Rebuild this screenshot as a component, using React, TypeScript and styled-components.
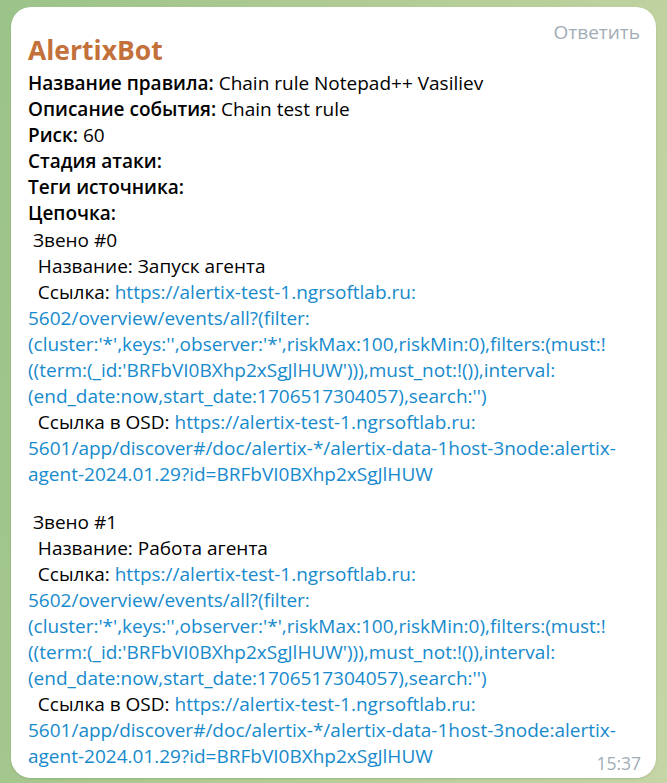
import React from 'react';
import styled, { createGlobalStyle } from 'styled-components';

const GlobalStyle = createGlobalStyle`
  html, body {
    margin: 0;
    padding: 0;
    height: 100%;
  }
  body {
    font-family: 'Open Sans', 'Noto Sans', sans-serif;
    background: linear-gradient(100deg, #9bc389 0%, #b3cc95 50%, #c5d5a5 100%);
  }
`;

const LINK_ID = "BRFbVI0BXhp2xSgJlHUW";

type Link = {
  title: string;
  name: string;
};

const chain: Link[] = [
  { title: 'Звено #0', name: 'Запуск агента' },
  { title: 'Звено #1', name: 'Работа агента' },
];

function ChainBlock({ link, last }: { link: Link; last: boolean }) {
  return (
    <>
      <Line>{' ' + link.title}</Line>
      <Line>{'  Название: ' + link.name}</Line>
      <Line>
        {'  Ссылка: '}
        <A>https://alertix-test-1.ngrsoftlab.ru:</A>
      </Line>
      <Line><A>5602/overview/events/all?(filter:</A></Line>
      <Line><A>(cluster:'*',keys:'',observer:'*',riskMax:100,riskMin:0),filters:(must:!</A></Line>
      <Line><A>((term:(_id:'{LINK_ID}'))),must_not:!()),interval:</A></Line>
      <Line><A>(end_date:now,start_date:1706517304057),search:'')</A></Line>
      <Line>
        {'  Ссылка в OSD: '}
        <A>https://alertix-test-1.ngrsoftlab.ru:</A>
      </Line>
      <Line><A>5601/app/discover#/doc/alertix-*/alertix-data-1host-3node:alertix-</A></Line>
      {last ? (
        <LastLine>
          <A>agent-2024.01.29?id={LINK_ID}</A>
          <Time>15:37</Time>
        </LastLine>
      ) : (
        <Line><A>agent-2024.01.29?id={LINK_ID}</A></Line>
      )}
    </>
  );
}

export default function App() {
  return (
    <>
      <GlobalStyle />
      <Page>
        <Bubble>
          <Header>
            <Title>AlertixBot</Title>
            <Reply>Ответить</Reply>
          </Header>
          <Body>
            <Line><B>Название правила:</B> Chain rule Notepad++ Vasiliev</Line>
            <Line><B>Описание события:</B> Chain test rule</Line>
            <Line><B>Риск:</B> 60</Line>
            <Line><B>Стадия атаки:</B></Line>
            <Line><B>Теги источника:</B></Line>
            <Line><B>Цепочка:</B></Line>
            {chain.map((link, i) => (
              <React.Fragment key={link.title}>
                {i > 0 && <Spacer />}
                <ChainBlock link={link} last={i === chain.length - 1} />
              </React.Fragment>
            ))}
          </Body>
        </Bubble>
      </Page>
    </>
  );
}

const Page = styled.div`
  padding: 7px 11px 5px 11px;
  box-sizing: border-box;
  width: 667px;
`;

const Bubble = styled.div`
  background: #ffffff;
  border-radius: 20px;
  padding: 14px 15px 9px 17px;
  box-shadow: 0 1px 2px rgba(0, 0, 0, 0.12);
  display: flex;
  flex-direction: column;
`;

const Header = styled.div`
  display: flex;
  justify-content: space-between;
  align-items: flex-start;
`;

const Title = styled.div`
  margin-top: 13px;
  line-height: 32px;
  font-size: 26.5px;
  font-weight: 700;
  color: #c3703a;
`;

const Reply = styled.div`
  line-height: 22px;
  font-size: 19px;
  color: #a2acb6;
  margin-right: 1px;
`;

const Body = styled.div`
  margin-top: 4px;
  font-size: 19px;
  line-height: 26.1px;
  color: #000000;
`;

const Line = styled.div`
  white-space: pre;
`;

const LastLine = styled.div`
  display: flex;
  justify-content: space-between;
  align-items: flex-end;
  white-space: pre;
`;

const B = styled.b`
  font-weight: 600;
`;

const A = styled.span`
  color: #168acd;
`;

const Spacer = styled.div`
  height: 21px;
`;

const Time = styled.span`
  font-size: 17.5px;
  line-height: 20px;
  color: #a2acb6;
  margin-bottom: -4px;
`;
